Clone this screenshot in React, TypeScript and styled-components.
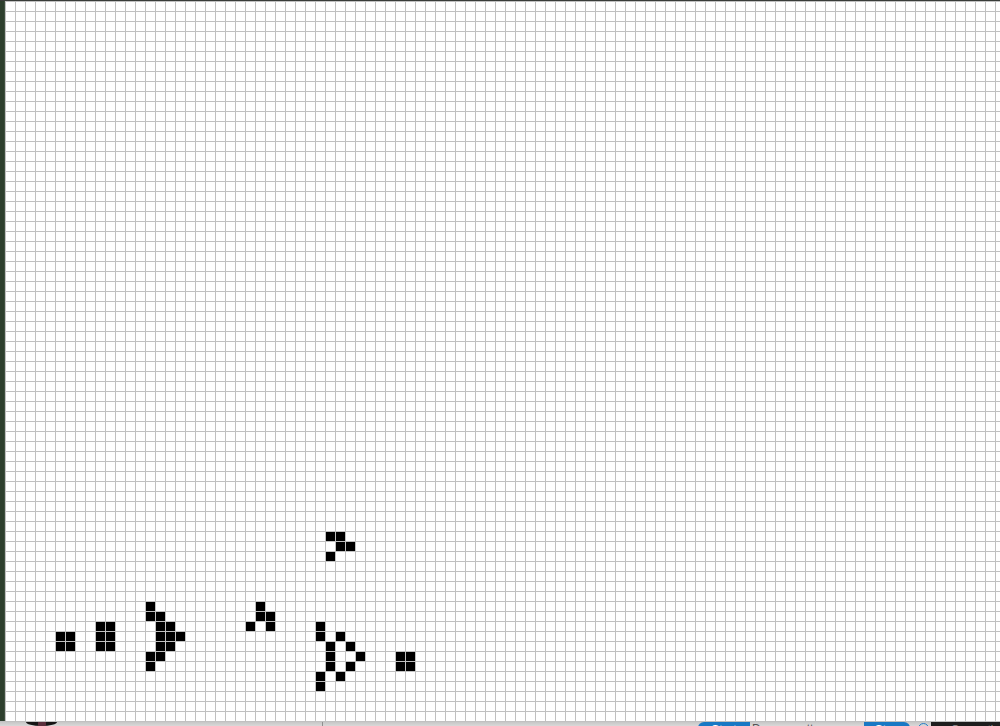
import React from "react";
import styled, { createGlobalStyle } from "styled-components";

const GlobalStyle = createGlobalStyle`
  html, body {
    margin: 0;
    padding: 0;
    width: 1000px;
    height: 726px;
    overflow: hidden;
    background: #ffffff;
    font-family: "Liberation Sans", Arial, sans-serif;
  }
  #root { width: 1000px; height: 726px; }
`;

const Screen = styled.div`
  width: 1000px;
  height: 726px;
  display: flex;
  flex-direction: column;
  overflow: hidden;
`;

const TopEdge = styled.div`
  height: 1px;
  flex: 0 0 1px;
  background: #3a3d3a;
`;

const Middle = styled.div`
  display: flex;
  flex: 0 0 720px;
  height: 720px;
`;

const SideStrip = styled.div`
  flex: 0 0 5px;
  background: #2d3f2d;
  box-shadow: inset -1px 0 0 #3e503e;
`;

const Board = styled.div`
  flex: 1;
  overflow: hidden;
  display: grid;
  grid-template-columns: repeat(100, 10px);
  grid-template-rows: repeat(72, 10px);
  background-color: #ffffff;
  background-image:
    linear-gradient(to right, #c0c0c0 1px, transparent 1px),
    linear-gradient(to bottom, #c0c0c0 1px, transparent 1px);
  background-size: 10px 10px;
`;

const Cell = styled.div<{ $c: number; $r: number }>`
  grid-column: ${(p) => p.$c + 1};
  grid-row: ${(p) => p.$r + 1};
  width: 9px;
  height: 9px;
  margin: 1px 0 0 1px;
  background: #000000;
`;

const BottomBar = styled.div`
  flex: 0 0 5px;
  height: 5px;
  display: flex;
  align-items: flex-start;
  overflow: hidden;
  border-top: 1px solid #c0c0c0;
  box-sizing: border-box;
  background: linear-gradient(to bottom, #c6c6c6, #d8d8d8);
`;

const Avatar = styled.div`
  margin-left: 26px;
  width: 31px;
  height: 4px;
  background: #151515;
  border-radius: 0 0 50% 50% / 0 0 100% 100%;
  display: flex;
  justify-content: center;
`;

const AvatarSpot = styled.div`
  width: 8px;
  height: 4px;
  background: #5a2f3c;
`;

const Divider = styled.div`
  margin-left: 265px;
  width: 1px;
  height: 5px;
  background: #8f8f8f;
`;

const BlueButton = styled.div<{ $w: number; $ml: number; $left?: boolean }>`
  margin-left: ${(p) => p.$ml}px;
  width: ${(p) => p.$w}px;
  height: 24px;
  background: #1878c4;
  border-radius: ${(p) => (p.$left ? "6px 0 0 0" : "0 6px 0 0")};
  color: #ffffff;
  font-size: 12px;
  line-height: 12px;
  padding-top: 2px;
  box-sizing: border-box;
  text-align: center;
  overflow: hidden;
`;

const StatusText = styled.div`
  margin-left: 2px;
  width: 108px;
  color: #555555;
  font-size: 12px;
  line-height: 12px;
  padding-top: 1px;
  white-space: nowrap;
  overflow: hidden;
`;

const HelpCircle = styled.div`
  margin-left: 8px;
  width: 9px;
  height: 9px;
  border: 1px solid #2a7fc8;
  border-radius: 50%;
  margin-top: 1px;
`;

const DarkPanel = styled.div`
  margin-left: 2px;
  flex: 1;
  height: 5px;
  background: #1e1e1e;
  color: #9a9a9a;
  font-size: 11px;
  line-height: 11px;
  padding: 2px 0 0 20px;
  box-sizing: border-box;
  white-space: nowrap;
  overflow: hidden;
`;

const LIVE: Array<[number, number]> = [
  // block
  [5, 63], [6, 63], [5, 64], [6, 64],
  // 2x3 block
  [9, 62], [10, 62], [9, 63], [10, 63], [9, 64], [10, 64],
  // arrow shape
  [14, 60],
  [14, 61], [15, 61],
  [15, 62], [16, 62],
  [15, 63], [16, 63], [17, 63],
  [15, 64], [16, 64],
  [14, 65], [15, 65],
  [14, 66],
  // glider top
  [32, 53], [33, 53],
  [33, 54], [34, 54],
  [32, 55],
  // glider left
  [25, 60],
  [25, 61], [26, 61],
  [24, 62], [26, 62],
  // right structure
  [31, 62],
  [31, 63], [33, 63],
  [32, 64], [34, 64],
  [32, 65], [35, 65],
  [32, 66], [34, 66],
  [31, 67], [33, 67],
  [31, 68],
  // block right
  [39, 65], [40, 65], [39, 66], [40, 66],
];

export default function App() {
  return (
    <>
      <GlobalStyle />
      <Screen>
        <TopEdge />
        <Middle>
          <SideStrip />
          <Board>
            {LIVE.map(([c, r]) => (
              <Cell key={`${c}-${r}`} $c={c} $r={r} />
            ))}
          </Board>
        </Middle>
        <BottomBar>
          <Avatar>
            <AvatarSpot />
          </Avatar>
          <Divider />
          <BlueButton $w={52} $ml={375} $left>
            Start
          </BlueButton>
          <StatusText>Draw a pattern</StatusText>
          <BlueButton $w={46} $ml={4}>
            Step
          </BlueButton>
          <HelpCircle />
          <DarkPanel>Generation 0</DarkPanel>
        </BottomBar>
      </Screen>
    </>
  );
}
